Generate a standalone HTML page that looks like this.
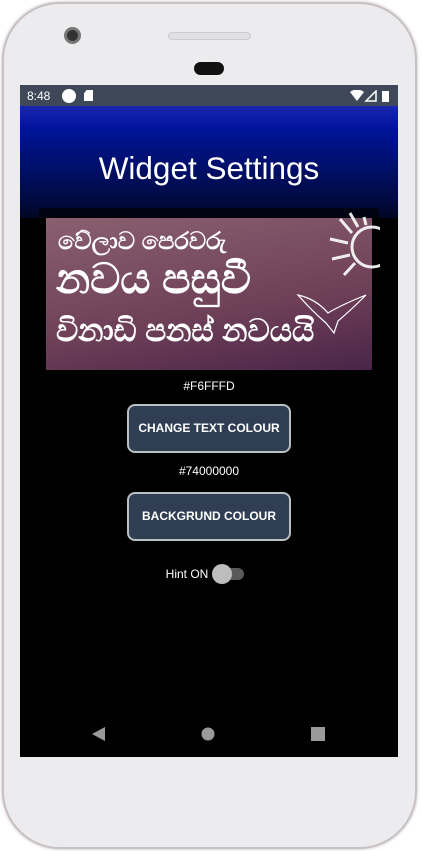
<!DOCTYPE html>
<html><head><meta charset="utf-8"><style>
*{margin:0;padding:0;box-sizing:border-box}
body{width:422px;height:851px;background:#fff;position:relative;overflow:hidden;font-family:"Liberation Sans",sans-serif}
.phone{position:absolute;left:2px;top:2px;width:415px;height:847px;border-radius:58px;background:#ececee;border:2px solid #c9c0c4;box-shadow:0 0 3px #bbb}
.screen{position:absolute;left:20px;top:85px;width:378px;height:672px;background:#000;overflow:hidden}
.status{position:absolute;left:0;top:0;width:378px;height:21px;background:#3f4858;color:#fff;font-size:12px}
.grad{position:absolute;left:0;top:21px;width:378px;height:112px;background:linear-gradient(#1a26b0,#00149a 20%,#001070 50%,#000a40 85%,#000622)}
.btn{position:absolute;left:107px;width:164px;height:49px;border:2px solid #b8c0c4;border-radius:8px;background:#2f3e52;color:#fff;font-size:12px;font-weight:bold;text-align:center;line-height:45px}
.lbl{position:absolute;left:0;width:378px;text-align:center;color:#fff;font-size:12px}
.si{font-family:"Liberation Sans",sans-serif;color:#fff;position:absolute;font-weight:bold;white-space:nowrap}
</style></head><body>
<div class="phone"></div>
<div style="position:absolute;left:64px;top:27px;width:17px;height:17px;border-radius:50%;background:#333;border:3px solid #777"></div>
<div style="position:absolute;left:168px;top:32px;width:83px;height:8px;border-radius:4px;background:#dfe0e3;border:1px solid #ccc"></div>
<div style="position:absolute;left:194px;top:62px;width:30px;height:13px;border-radius:7px;background:#111"></div>
<div class="screen">
<div class="status"><span style="position:absolute;left:7px;top:4px">8:48</span>
<div style="position:absolute;left:42px;top:4px;width:14px;height:14px;border-radius:50%;background:#fff"></div>
<div style="position:absolute;left:64px;top:5px;width:9px;height:11px;background:#fff;clip-path:polygon(30% 0,100% 0,100% 100%,0 100%,0 30%)"></div>
<svg style="position:absolute;left:330px;top:5px" width="44" height="12"><path d="M0 2Q7-3 14 2L7 11Z" fill="#fff"/><path d="M16 11L26 1V11Z" fill="none" stroke="#fff" stroke-width="1.5"/><rect x="32" y="1" width="7" height="11" fill="#fff"/></svg>
</div>
<div class="grad"></div>
<div style="position:absolute;left:0;top:65px;width:378px;text-align:center;color:#fff;font-size:31.5px">Widget Settings</div>
<div style="position:absolute;left:19px;top:123px;width:340px;height:170px;background:#000;opacity:.6"></div>
<div style="position:absolute;left:26px;top:133px;width:326px;height:152px;background:linear-gradient(170deg,#8a6070,#6e4058 60%,#4a2448)"></div>
<div class="si" style="left:38px;top:143px;font-size:24px">වේලාව පෙරවරු</div>
<div class="si" style="left:36px;top:170px;font-size:42px">නවය පසුවී</div>
<div class="si" style="left:36px;top:228px;font-size:31px">විනාඩි පනස් නවයයි</div>
<svg style="position:absolute;left:290px;top:124px" width="70" height="80"><g stroke="#fff" stroke-width="3" fill="none" opacity=".9"><circle cx="62" cy="38" r="20"/><path d="M30 10L42 24M20 30L38 34M22 50L40 46M34 66L45 54M54 8L56 16M40 4L48 18"/></g></svg>
<svg style="position:absolute;left:276px;top:200px" width="80" height="50"><path d="M2 10Q20 14 32 28Q45 20 70 10Q55 25 42 36L38 48L30 38Q15 25 2 10Z" fill="none" stroke="#fff" stroke-width="1.2"/></svg>
<div class="lbl" style="top:294px">#F6FFFD</div>
<div class="btn" style="top:319px">CHANGE TEXT COLOUR</div>
<div class="lbl" style="top:379px">#74000000</div>
<div class="btn" style="top:407px">BACKGRUND COLOUR</div>
<div class="lbl" style="top:482px;left:-22px">Hint ON</div>
<div style="position:absolute;left:199px;top:483px;width:25px;height:12px;border-radius:6px;background:#5a5a5a"></div>
<div style="position:absolute;left:192px;top:479px;width:20px;height:20px;border-radius:50%;background:#bdbdbd"></div>
<svg style="position:absolute;left:0;top:639px" width="378" height="20"><path d="M72 10L85 3V17Z" fill="#9a9a9a"/><circle cx="188" cy="10" r="6.5" fill="#9a9a9a"/><rect x="291" y="3" width="14" height="14" fill="#9a9a9a"/></svg>
</div>
</body></html>
